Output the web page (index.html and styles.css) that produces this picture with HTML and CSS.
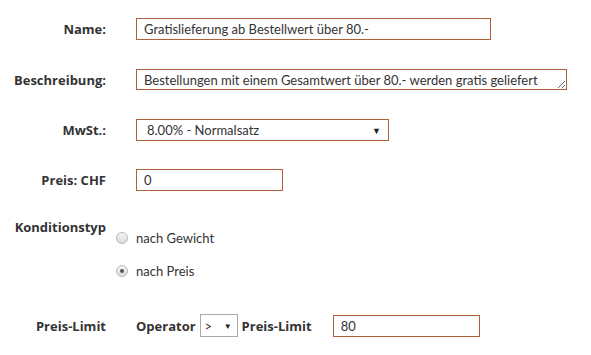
FILE: index.html
```html
<!DOCTYPE html>
<html lang="de">
<head>
<meta charset="utf-8">
<link rel="stylesheet" href="styles.css">
</head>
<body>
<form class="form">
  <div class="row row-name">
    <label class="lbl">Name:</label>
    <div class="val"><input class="field f-name" type="text" value="Gratislieferung ab Bestellwert über 80.-"></div>
  </div>
  <div class="row row-desc">
    <label class="lbl">Beschreibung:</label>
    <div class="val"><textarea class="field f-desc" rows="1">Bestellungen mit einem Gesamtwert über 80.- werden gratis geliefert</textarea></div>
  </div>
  <div class="row row-mwst">
    <label class="lbl">MwSt.:</label>
    <div class="val">
      <div class="select f-mwst"><span>8.00% - Normalsatz</span><span class="arrow">▼</span></div>
    </div>
  </div>
  <div class="row row-preis">
    <label class="lbl">Preis: CHF</label>
    <div class="val"><input class="field f-preis" type="text" value="0"></div>
  </div>
  <div class="row row-kond">
    <label class="lbl lbl-top">Konditionstyp</label>
    <div class="val radios">
      <div class="radio-item r1"><span class="radio"></span><span>nach Gewicht</span></div>
      <div class="radio-item r2"><span class="radio checked"></span><span>nach Preis</span></div>
    </div>
  </div>
  <div class="row row-limit">
    <label class="lbl">Preis-Limit</label>
    <div class="val inline">
      <span class="b">Operator</span>
      <div class="select f-op"><span>&gt;</span><span class="arrow">▼</span></div>
      <span class="b">Preis-Limit</span>
      <input class="field f-limit" type="text" value="80">
    </div>
  </div>
</form>
</body>
</html>
```

FILE: styles.css
```css
* { box-sizing: border-box; }
html, body { margin: 0; padding: 0; background: #fff; }
body {
  font-family: "Lato", "Open Sans", sans-serif;
  font-size: 13px;
  color: #333;
  width: 591px;
  height: 355px;
  overflow: hidden;
}
.form { display: flex; flex-direction: column; padding-top: 18px; }
.row { display: grid; grid-template-columns: 106px 1fr; column-gap: 30px; align-items: center; }
.lbl, .b { font-family: "Open Sans", "Lato", sans-serif; font-weight: 700; font-size: 13px; color: #333; }
.lbl { text-align: right; }
.lbl-top { align-self: start; margin-top: -1px; }
.row-desc { margin-top: 29px; }
.row-mwst { margin-top: 29px; }
.row-preis { margin-top: 28px; }
.row-kond { margin-top: 28px; }
.row-limit { margin-top: 33px; }
.field {
  font-family: inherit;
  font-size: 13px;
  color: #333;
  border: 1px solid #b0603a;
  background: #fff;
  height: 22px;
  padding: 0 7px;
  margin: 0;
  outline: none;
  display: block;
}
.f-name { width: 355px; }
.f-desc { width: 431px; height: 21px; resize: both; padding: 1px 7px 0; line-height: 18px; overflow: hidden; }
.f-preis { width: 147px; }
.select {
  display: flex; align-items: center; justify-content: space-between;
  border: 1px solid #b0603a; height: 22px; padding: 0 7px 0 10px; background: #fff;
}
.f-mwst { width: 253px; }
.arrow { font-size: 9px; color: #222; }
.radios { display: flex; flex-direction: column; gap: 13px; padding-top: 9px; }
.radio-item { display: flex; align-items: center; gap: 8px; margin-left: -20px; height: 20px; }
.radio {
  width: 12px; height: 12px; border-radius: 50%;
  border: 1px solid #b8b8b8; background: linear-gradient(#f4f4f4, #dcdcdc);
  display: inline-block; position: relative;
}
.radio.checked::after {
  content: ""; position: absolute; left: 3px; top: 3px; width: 4px; height: 4px; border-radius: 50%; background: #555;
}
.inline { display: flex; align-items: center; gap: 4px; }
.f-op { width: 38px; border-color: #aaa; height: 23px; padding: 0 5px 0 4px; }
.f-op .arrow { font-size: 8px; }
.f-limit { width: 147px; margin-left: 17px; }
```
